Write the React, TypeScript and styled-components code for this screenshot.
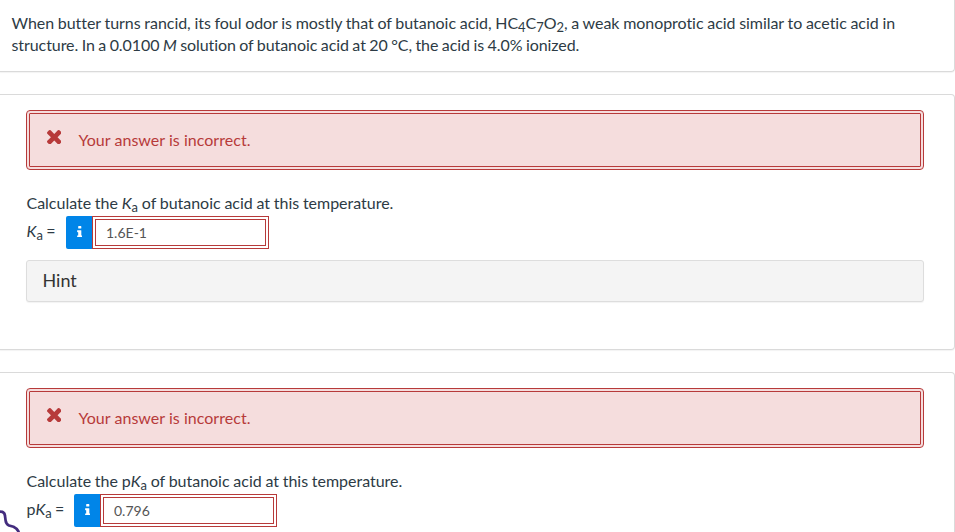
import React from 'react';
import styled, { createGlobalStyle } from 'styled-components';

const GlobalStyle = createGlobalStyle`
  *, *::before, *::after { box-sizing: border-box; }
  html, body { margin: 0; height: 100%; overflow: hidden; background: #fff; }
  body { font-family: Lato, sans-serif; font-size: 16px; line-height: 22px; color: #2d3b45; }
`;

const Page = styled.main`
  position: relative;
  height: 532px;
  overflow: hidden;
  display: flex;
  flex-direction: column;
  gap: 22px;
`;

const Panel = styled.section<{ $height: number; $first?: boolean }>`
  flex: none;
  height: ${p => p.$height}px;
  padding: ${p => (p.$first ? '12px 40px 0 11.5px' : '15px 30px 0 26px')};
  border: 1px solid #dadada;
  border-width: ${p => (p.$first ? '0 1px 1px 0' : '1px 1px 1px 0')};
  border-radius: ${p => (p.$first ? '0 0 4px 0' : '0 4px 4px 0')};
  box-shadow: 0 1px 1px rgba(0, 0, 0, 0.05);
`;

const Paragraph = styled.p`
  margin: 0;
  white-space: nowrap;
`;

const Line = styled.span<{ $letter: number; $word: number }>`
  letter-spacing: ${p => p.$letter}px;
  word-spacing: ${p => p.$word}px;
`;

const Sub = styled.sub`
  font-size: 13px;
  line-height: 0;
  position: relative;
  vertical-align: baseline;
  bottom: -3px;
`;

const Alert = styled.div`
  display: flex;
  height: 60px;
  padding: 15px 16px;
  border: 4px double #b73a3a;
  border-radius: 4px;
  background: #f5dddd;
  color: #b73a3a;
  letter-spacing: 0.03px;
`;

const CrossIcon = styled.svg`
  width: 14.5px;
  height: 14.5px;
  margin: 0.5px 17.3px 0 0.7px;
  fill: currentColor;
`;

const Question = styled(Paragraph)`
  margin-top: 22px;
  padding-left: 0.5px;
  word-spacing: -0.3px;
  letter-spacing: -0.02px;
`;

const AnswerRow = styled.div`
  display: flex;
  align-items: center;
  height: 33px;
  margin-top: 2px;
`;

const AnswerLabel = styled.label<{ $width: number }>`
  flex: none;
  width: ${p => p.$width}px;
  padding: 0 0 3px 0.5px;
  white-space: nowrap;
  word-spacing: -0.8px;
`;

const InfoButton = styled.button`
  display: flex;
  align-items: center;
  justify-content: center;
  width: 26px;
  height: 33px;
  padding: 0 0 2px 1px;
  border: 0;
  border-radius: 2px 0 0 2px;
  background: #0085e8;
`;

const InfoIcon = styled.svg`
  width: 5.5px;
  height: 11.5px;
  fill: #fff;
`;

const AnswerInput = styled.input`
  width: 177px;
  height: 33px;
  margin: 0;
  padding: 0 10px;
  border: 4px double #b73a3a;
  border-radius: 0;
  outline: 0;
  background: #fff;
  color: #555;
  font: 14px Lato, sans-serif;
`;

const Hint = styled.div`
  height: 42px;
  margin-top: 11px;
  padding: 8px 15.5px;
  border: 1px solid #ddd;
  border-radius: 3px;
  background: #f4f4f4;
  box-shadow: 0 1px 1px rgba(0, 0, 0, 0.05);
  color: #333;
  font-size: 18px;
  line-height: 23px;
`;

const PenStroke = styled.svg`
  position: absolute;
  left: 0;
  bottom: 0;
  width: 24px;
  height: 28px;
  fill: none;
  stroke: #432c7e;
  stroke-width: 2.7;
  stroke-linecap: round;
  stroke-linejoin: round;
`;

const IncorrectAlert = () => (
  <Alert role="alert">
    <CrossIcon viewBox="302 366 1188 1188" aria-hidden="true">
      <path d="M1490 1322q0 40-28 68l-136 136q-28 28-68 28t-68-28l-294-294-294 294q-28 28-68 28t-68-28l-136-136q-28-28-28-68t28-68l294-294-294-294q-28-28-28-68t28-68l136-136q28-28 68-28t68 28l294 294 294-294q28-28 68-28t68 28l136 136q28 28 28 68t-28 68l-294 294 294 294q28 28 28 68z" />
    </CrossIcon>
    Your answer is incorrect.
  </Alert>
);

interface AnswerProps {
  id: string;
  label: React.ReactNode;
  labelWidth: number;
  value: string;
}

const Answer = ({ id, label, labelWidth, value }: AnswerProps) => (
  <AnswerRow>
    <AnswerLabel htmlFor={id} $width={labelWidth}>{label} =</AnswerLabel>
    <InfoButton type="button" aria-label="Information">
      <InfoIcon viewBox="576 128 640 1408" aria-hidden="true">
        <path d="M1216 1344v128q0 26-19 45t-45 19h-512q-26 0-45-19t-19-45v-128q0-26 19-45t45-19h64v-384h-64q-26 0-45-19t-19-45v-128q0-26 19-45t45-19h384q26 0 45 19t19 45v576h64q26 0 45 19t19 45zm-128-1152v192q0 26-19 45t-45 19h-256q-26 0-45-19t-19-45v-192q0-26 19-45t45-19h256q26 0 45 19t19 45z" />
      </InfoIcon>
    </InfoButton>
    <AnswerInput id={id} defaultValue={value} />
  </AnswerRow>
);

const Ka = () => <><i>K</i><Sub>a</Sub></>;

export default function App() {
  return (
    <Page>
      <GlobalStyle />
      <Panel $height={72} $first>
        <Paragraph>
          <Line $letter={-0.05} $word={-0.3}>
            When butter turns rancid, its foul odor is mostly that of butanoic acid, HC<Sub>4</Sub>C<Sub>7</Sub>O<Sub>2</Sub>, a weak monoprotic acid similar to acetic acid in
          </Line>
          <br />
          <Line $letter={-0.08} $word={-0.5}>
            structure. In a 0.0100 <i>M</i> solution of butanoic acid at 20 °C, the acid is 4.0% ionized.
          </Line>
        </Paragraph>
      </Panel>
      <Panel $height={256}>
        <IncorrectAlert />
        <Question>Calculate the <Ka /> of butanoic acid at this temperature.</Question>
        <Answer id="ka" label={<Ka />} labelWidth={40} value="1.6E-1" />
        <Hint>Hint</Hint>
      </Panel>
      <Panel $height={256}>
        <IncorrectAlert />
        <Question>Calculate the p<Ka /> of butanoic acid at this temperature.</Question>
        <Answer id="pka" label={<>p<Ka /></>} labelWidth={48} value="0.796" />
      </Panel>
      <PenStroke viewBox="0 0 24 28" aria-hidden="true">
        <path d="M-1 7.5 L2.3 7.8 Q4.8 9 5 12 L5.6 16.5 Q6 20 9 21.5 L13.5 22.8 Q16.5 24.2 18.5 27.5" />
      </PenStroke>
    </Page>
  );
}
